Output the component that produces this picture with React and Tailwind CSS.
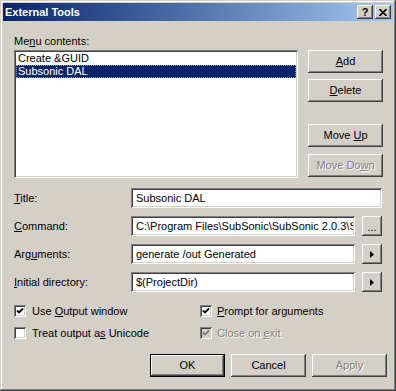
import React from 'react';

// Win2000 3D bevels
const raised =
  'shadow-[inset_-1px_-1px_0_#404040,inset_1px_1px_0_#ffffff,inset_-2px_-2px_0_#808080,inset_2px_2px_0_#d4d0c8]';
const sunken =
  'shadow-[inset_1px_1px_0_#808080,inset_-1px_-1px_0_#ffffff,inset_2px_2px_0_#404040,inset_-2px_-2px_0_#d4d0c8]';
const disabledText = 'text-[#808080] [text-shadow:1px_1px_0_#ffffff]';

function Btn({ children, disabled, className = '' }) {
  return (
    <div
      className={`flex items-center justify-center bg-[#d4d0c8] ${raised} ${
        disabled ? disabledText : 'text-black'
      } ${className}`}
    >
      {children}
    </div>
  );
}

function Check({ checked, disabled }) {
  return (
    <div
      className={`w-[12px] h-[12px] flex items-center justify-center ${sunken} ${
        disabled ? 'bg-[#d4d0c8]' : 'bg-white'
      }`}
    >
      {checked && (
        <svg width="8" height="8" viewBox="0 0 8 8">
          <path
            d="M1 3.5 L3 5.5 L7 1.5"
            fill="none"
            stroke={disabled ? '#808080' : '#000'}
            strokeWidth="1.8"
          />
        </svg>
      )}
    </div>
  );
}

function Arrow() {
  return (
    <svg width="4" height="7" viewBox="0 0 4 7">
      <path d="M0 0 L4 3.5 L0 7 Z" fill="#000" />
    </svg>
  );
}

function Field({ children, className = '' }) {
  return (
    <div
      className={`h-[20px] bg-white ${sunken} flex items-center pl-[5px] pr-[2px] overflow-hidden whitespace-nowrap ${className}`}
    >
      <span className="overflow-hidden">{children}</span>
    </div>
  );
}

function FormRow({ label, children, first }) {
  return (
    <div className={`flex items-center h-[20px] ${first ? '' : 'mt-[8px]'}`}>
      <div className="w-[117px]">{label}</div>
      {children}
    </div>
  );
}

export default function App() {
  return (
    <div
      className={`w-[396px] h-[391px] p-[3px] flex flex-col bg-[#d4d0c8] text-[11px] leading-[13px] text-black font-['Liberation_Sans',Arial,sans-serif] shadow-[inset_-1px_-1px_0_#404040,inset_1px_1px_0_#d4d0c8,inset_-2px_-2px_0_#808080,inset_2px_2px_0_#ffffff]`}
    >
      {/* title bar */}
      <div className="h-[18px] flex items-center pl-[2px] pr-[2px] bg-linear-to-r from-[#0a246a] to-[#a6caf0]">
        <span className="text-white font-bold flex-1">External Tools</span>
        <div className="flex gap-[2px]">
          <div className={`w-[16px] h-[14px] bg-[#d4d0c8] ${raised} flex items-center justify-center font-bold text-[11px] leading-none`}>
            ?
          </div>
          <div className={`w-[16px] h-[14px] bg-[#d4d0c8] ${raised} flex items-center justify-center`}>
            <svg width="8" height="7" viewBox="0 0 8 7">
              <path d="M0.5 0 L7.5 7 M7.5 0 L0.5 7" stroke="#000" strokeWidth="1.6" />
            </svg>
          </div>
        </div>
      </div>

      <div className="pl-[11px] flex flex-col">
        <div className="mt-[14px] h-[13px]">
          Me<u>n</u>u contents:
        </div>

        <div className="mt-[2px] flex">
          <div className={`w-[284px] h-[128px] bg-white ${sunken} p-[2px]`}>
            <div className="h-[13px] pl-[2px]">Create &amp;GUID</div>
            <div className="h-[13px] pl-[1px] bg-[#0a246a] text-white border border-dotted border-[#8c96c0] leading-[11px]">
              Subsonic DAL
            </div>
          </div>
          <div className="ml-[10px] w-[75px] flex flex-col">
            <Btn className="h-[23px]">
              <span><u>A</u>dd</span>
            </Btn>
            <Btn className="h-[23px] mt-[6px]">
              <span><u>D</u>elete</span>
            </Btn>
            <Btn className="h-[23px] mt-[22px]">
              <span>Move <u>U</u>p</span>
            </Btn>
            <Btn className="h-[23px] mt-[7px]" disabled>
              <span>Move Do<u>w</u>n</span>
            </Btn>
          </div>
        </div>

        <div className="mt-[10px] flex flex-col">
          <FormRow first label={<span><u>T</u>itle:</span>}>
            <Field className="w-[251px]">Subsonic DAL</Field>
          </FormRow>
          <FormRow label={<span><u>C</u>ommand:</span>}>
            <Field className="w-[224px]">C:\Program Files\SubSonic\SubSonic 2.0.3\Su</Field>
            <Btn className="ml-[7px] w-[20px] h-[20px]">
              <span className="mt-[2px]">...</span>
            </Btn>
          </FormRow>
          <FormRow label={<span>Arg<u>u</u>ments:</span>}>
            <Field className="w-[224px]">generate /out Generated</Field>
            <Btn className="ml-[7px] w-[20px] h-[20px]">
              <Arrow />
            </Btn>
          </FormRow>
          <FormRow label={<span><u>I</u>nitial directory:</span>}>
            <Field className="w-[224px]">$(ProjectDir)</Field>
            <Btn className="ml-[7px] w-[20px] h-[20px]">
              <Arrow />
            </Btn>
          </FormRow>
        </div>

        <div className="mt-[13px] grid grid-cols-[186px_1fr] gap-y-[10px]">
          <div className="flex items-center h-[12px] gap-[6px]">
            <Check checked />
            <span>Use <u>O</u>utput window</span>
          </div>
          <div className="flex items-center h-[12px] gap-[5px]">
            <Check checked />
            <span><u>P</u>rompt for arguments</span>
          </div>
          <div className="flex items-center h-[12px] gap-[6px]">
            <Check />
            <span>Treat output a<u>s</u> Unicode</span>
          </div>
          <div className="flex items-center h-[12px] gap-[5px]">
            <Check checked disabled />
            <span className={disabledText}>Close on <u>e</u>xit</span>
          </div>
        </div>

        <div className="mt-[15px] ml-[136px] flex gap-[6px]">
          <div className="w-[75px] h-[23px] border border-black">
            <Btn className="w-full h-full">OK</Btn>
          </div>
          <Btn className="w-[75px] h-[23px]">Cancel</Btn>
          <Btn className="w-[75px] h-[23px]" disabled>Apply</Btn>
        </div>
      </div>
    </div>
  );
}
